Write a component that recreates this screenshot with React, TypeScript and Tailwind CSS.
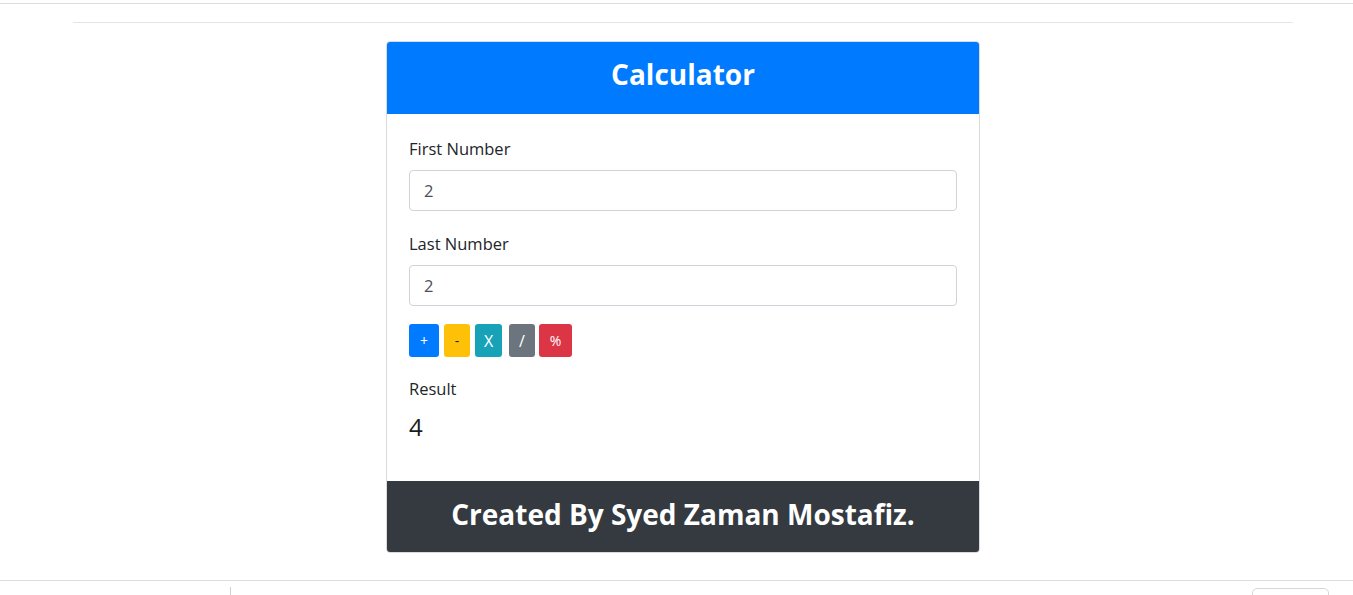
import React from "react";

export default function App() {
  const font = { fontFamily: '"Open Sans", "Noto Sans", sans-serif' };
  return (
    <div className="w-[1353px] h-[595px] overflow-hidden bg-white text-[#212529]" style={font}>
      <div className="h-[3px]" />
      <div className="border-t border-[#dcdcdc]" />
      <div className="w-[1220px] ml-[73px]">
        <div className="h-[18px]" />
        <div className="border-t border-[#e5e5e5]" />
        <div className="h-[18px]" />
        <div className="mx-auto w-[594px] h-[512px] border border-[#dadada] rounded-[4px] overflow-hidden flex flex-col">
          <div className="bg-[#007bff] h-[72px] flex items-center justify-center">
            <h2 className="text-white font-bold text-[28px] leading-none -mt-[9px]">Calculator</h2>
          </div>
          <div className="flex-1 px-[22px] pt-[22px]">
            <label className="block text-[16.5px] leading-[26px] mb-[8px]">First Number</label>
            <input
              readOnly
              value="2"
              className="block w-full h-[41px] border border-[#ced4da] rounded-[4px] px-[14px] text-[16.5px] text-[#495057] outline-none"
            />
            <label className="block text-[16.5px] leading-[26px] mt-[20px] mb-[8px]">Last Number</label>
            <input
              readOnly
              value="2"
              className="block w-full h-[41px] border border-[#ced4da] rounded-[4px] px-[14px] text-[16.5px] text-[#495057] outline-none"
            />
            <div className="flex mt-[18px] h-[33px]">
              <button className="w-[30px] h-[33px] rounded-[3px] bg-[#007bff] text-white text-[14px] flex items-center justify-center">+</button>
              <button className="w-[26px] h-[33px] ml-[5px] rounded-[3px] bg-[#ffc107] text-[#212529] text-[14px] flex items-center justify-center">-</button>
              <button className="w-[27px] h-[33px] ml-[5px] rounded-[3px] bg-[#17a2b8] text-white text-[16px] flex items-center justify-center">X</button>
              <button className="w-[26px] h-[33px] ml-[7px] rounded-[3px] bg-[#6c757d] text-white text-[16px] flex items-center justify-center">/</button>
              <button className="w-[33px] h-[33px] ml-[4px] rounded-[3px] bg-[#dc3545] text-white text-[14px] flex items-center justify-center">%</button>
            </div>
            <div className="text-[16.5px] leading-[26px] mt-[19px]">Result</div>
            <div className="text-[24px] leading-[29px] font-medium mt-[10px] text-[#1a1d20]">4</div>
          </div>
          <div className="bg-[#343a40] h-[71px] flex items-center justify-center">
            <h2 className="text-white font-bold text-[28px] leading-none -mt-[5px]">Created By Syed Zaman Mostafiz.</h2>
          </div>
        </div>
      </div>
      <div className="h-[27px]" />
      <div className="border-t border-[#dcdcdc] relative h-[15px]">
        <div className="absolute left-[230px] top-[6px] w-px h-[10px] bg-[#d0d0d0]" />
        <div className="absolute left-[1252px] top-[7px] w-[77px] h-[12px] border border-[#d8d8d8] rounded-[5px]" />
      </div>
    </div>
  );
}
